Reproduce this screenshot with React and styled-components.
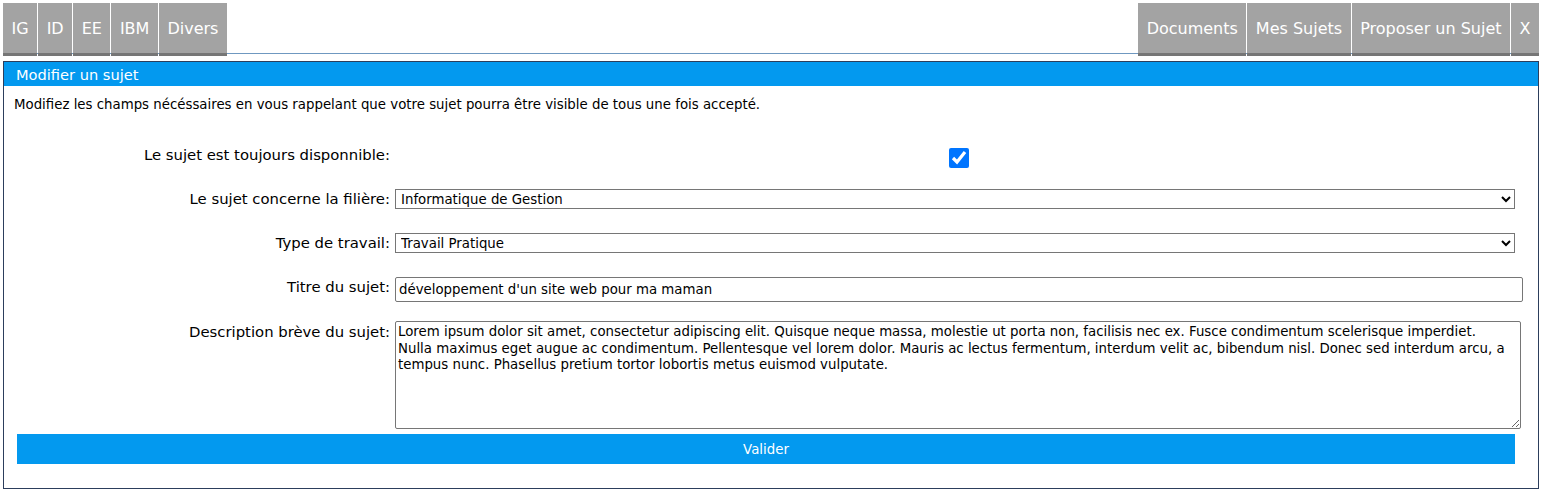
import React from "react";
import styled, { createGlobalStyle } from "styled-components";

const GlobalStyle = createGlobalStyle`
  body{
    margin: 0;
    background: #fff;
    font-family: "DejaVu Sans", Verdana, sans-serif;
    color: #000;
  }
`;

const Page = styled.div`
  padding: 3px 2px 0 3px;
`;

const Nav = styled.nav`
  display: flex;
  justify-content: space-between;
  align-items: flex-start;
  height: 50px;
  border-bottom: 1px solid #6f98c0;
`;

const TabGroup = styled.div`
  display: flex;
  gap: 1px;
`;

const Tab = styled.a`
  display: flex;
  align-items: center;
  height: 50px;
  padding: 0 8.5px;
  background: #a3a3a3;
  border-bottom: 3px solid #767676;
  color: #fff;
  font-size: 16px;
  text-decoration: none;
  cursor: pointer;
`;

const Panel = styled.section`
  margin-top: 7px;
  border: 1px solid #2c3e5c;
  height: 428px;
  box-sizing: border-box;
`;

const PanelHeader = styled.h2`
  margin: 0;
  height: 24px;
  padding: 0 12px;
  display: flex;
  align-items: center;
  background: #0399ef;
  color: #fff;
  font-size: 14.6px;
  font-weight: normal;
`;

const Intro = styled.p`
  margin: 11px 0 0 10px;
  font-size: 13.33px;
  line-height: 16px;
`;

const Form = styled.form`
  display: flex;
  flex-direction: column;
  padding: 0 15px 0 13px;
  margin-top: 33px;
`;

const Row = styled.div`
  display: grid;
  grid-template-columns: 373px 1fr;
  column-gap: 5px;
  align-items: start;
  margin-bottom: ${props => props.$gap || "0"};
`;

const Label = styled.label`
  text-align: right;
  font-size: 14.85px;
  line-height: 18px;
  padding-top: ${props => props.$top || "0"};
`;

const Field = styled.div`
  padding-right: ${props => props.$right || "0"};
  display: flex;
  justify-content: ${props => props.$center ? "center" : "stretch"};
`;

const Check = styled.input`
  width: 20px;
  height: 20px;
  margin: 2px 0 0;
  accent-color: #0075ff;
`;

const Select = styled.select`
  width: 100%;
  height: 20px;
  border: 1px solid #767676;
  border-radius: 0;
  font-family: "DejaVu Sans", Verdana, sans-serif;
  font-size: 13.33px;
  padding: 0 1px;
  color: #000;
  background: #fff;
`;

const TextInput = styled.input`
  width: 100%;
  height: 25px;
  box-sizing: border-box;
  border: 1px solid #767676;
  border-radius: 2px;
  font-family: "DejaVu Sans", Verdana, sans-serif;
  font-size: 13.33px;
  padding: 0 3px;
`;

const TextArea = styled.textarea`
  width: 100%;
  height: 108px;
  box-sizing: border-box;
  border: 1px solid #767676;
  border-radius: 2px;
  font-family: "DejaVu Sans", Verdana, sans-serif;
  font-size: 13.33px;
  line-height: 16.5px;
  padding: 2px 9px 2px 2px;
  resize: both;
`;

const Submit = styled.button`
  height: 30px;
  margin: 0 8px 0 0;
  border: none;
  background: #0399ef;
  color: #fff;
  font-family: "DejaVu Sans", Verdana, sans-serif;
  font-size: 13.33px;
  cursor: pointer;
`;

const leftTabs = ["IG", "ID", "EE", "IBM", "Divers"];
const rightTabs = ["Documents", "Mes Sujets", "Proposer un Sujet", "X"];

const description = "Lorem ipsum dolor sit amet, consectetur adipiscing elit. Quisque neque massa, molestie ut porta non, facilisis nec ex. Fusce condimentum scelerisque imperdiet. Nulla maximus eget augue ac condimentum. Pellentesque vel lorem dolor. Mauris ac lectus fermentum, interdum velit ac, bibendum nisl. Donec sed interdum arcu, a tempus nunc. Phasellus pretium tortor lobortis metus euismod vulputate.";

function App() {
  return (
    <Page>
      <GlobalStyle />
      <Nav>
        <TabGroup>
          {leftTabs.map(t => <Tab key={t}>{t}</Tab>)}
        </TabGroup>
        <TabGroup>
          {rightTabs.map(t => <Tab key={t}>{t}</Tab>)}
        </TabGroup>
      </Nav>
      <Panel>
        <PanelHeader>Modifier un sujet</PanelHeader>
        <Intro>Modifiez les champs nécéssaires en vous rappelant que votre sujet pourra être visible de tous une fois accepté.</Intro>
        <Form onSubmit={e => e.preventDefault()}>
          <Row $gap="21px">
            <Label>Le sujet est toujours disponnible:</Label>
            <Field $center>
              <Check type="checkbox" defaultChecked />
            </Field>
          </Row>

          <Row $gap="24px">
            <Label $top="1px">Le sujet concerne la filière:</Label>
            <Field $right="8px">
              <Select defaultValue="IG">
                <option value="IG">Informatique de Gestion</option>
              </Select>
            </Field>
          </Row>

          <Row $gap="24px">
            <Label $top="1px">Type de travail:</Label>
            <Field $right="8px">
              <Select defaultValue="TP">
                <option value="TP">Travail Pratique</option>
              </Select>
            </Field>
          </Row>

          <Row $gap="19px">
            <Label $top="1px">Titre du sujet:</Label>
            <Field>
              <TextInput defaultValue="développement d'un site web pour ma maman" />
            </Field>
          </Row>

          <Row $gap="5px">
            <Label $top="2px">Description brève du sujet:</Label>
            <Field $right="2px">
              <TextArea defaultValue={description} />
            </Field>
          </Row>

          <Submit type="submit">Valider</Submit>
        </Form>
      </Panel>
    </Page>
  );
}

export default App;
